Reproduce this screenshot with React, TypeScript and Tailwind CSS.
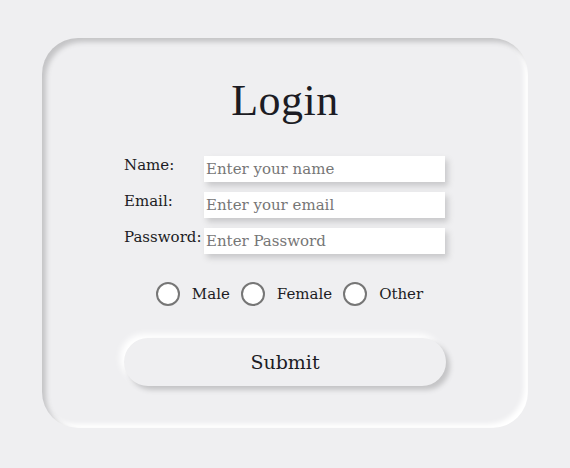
import { useState } from 'react'

const fields = [
  { label: 'Name:', type: 'text', placeholder: 'Enter your name' },
  { label: 'Email:', type: 'email', placeholder: 'Enter your email' },
  { label: 'Password:', type: 'password', placeholder: 'Enter Password' },
]

const genders = ['Male', 'Female', 'Other']

export default function App() {
  const [gender, setGender] = useState('')

  return (
    <div className="min-h-screen w-full bg-[#efeff1] flex items-center justify-center font-['DejaVu_Serif',serif] text-[#1c1c24]">
      {/* Card - inset neumorphic */}
      <div className="w-[486px] h-[390px] -mt-[2px] rounded-[36px] bg-[#efeff1] shadow-[inset_4px_4px_5px_#c4c4c6,inset_-4px_-4px_5px_#ffffff] flex flex-col items-center pt-[41px]">
        <h1 className="font-['Liberation_Serif',serif] text-[44px] leading-none tracking-[0.5px]">Login</h1>

        <form className="mt-[33px] flex flex-col gap-[10px]" onSubmit={(e) => e.preventDefault()}>
          {fields.map((f) => (
            <div key={f.label} className="flex items-start">
              <label className="w-20 text-[15px] leading-none pt-[2px] whitespace-nowrap">{f.label}</label>
              <input
                type={f.type}
                placeholder={f.placeholder}
                className="w-[241px] h-[26px] bg-white px-[2px] text-[15px] outline-none placeholder:text-[#767676] shadow-[3px_4px_6px_#c8c8ca]"
              />
            </div>
          ))}

          <div className="flex items-center justify-center gap-[11px] mt-[18px] ml-[9px]">
            {genders.map((g) => (
              <label key={g} className="flex items-center gap-3 text-[15px] cursor-pointer">
                <input
                  type="radio"
                  name="gender"
                  checked={gender === g}
                  onChange={() => setGender(g)}
                  className="appearance-none w-6 h-6 rounded-full border-2 border-[#767676] bg-white checked:bg-[#767676] checked:shadow-[inset_0_0_0_3px_white]"
                />
                {g}
              </label>
            ))}
          </div>

          <button
            type="submit"
            className="mt-[22px] w-[322px] h-[48px] rounded-full bg-[#efeff1] text-[19px] shadow-[4px_4px_5px_#c4c4c6,-4px_-4px_6px_#ffffff]"
          >
            Submit
          </button>
        </form>
      </div>
    </div>
  )
}
